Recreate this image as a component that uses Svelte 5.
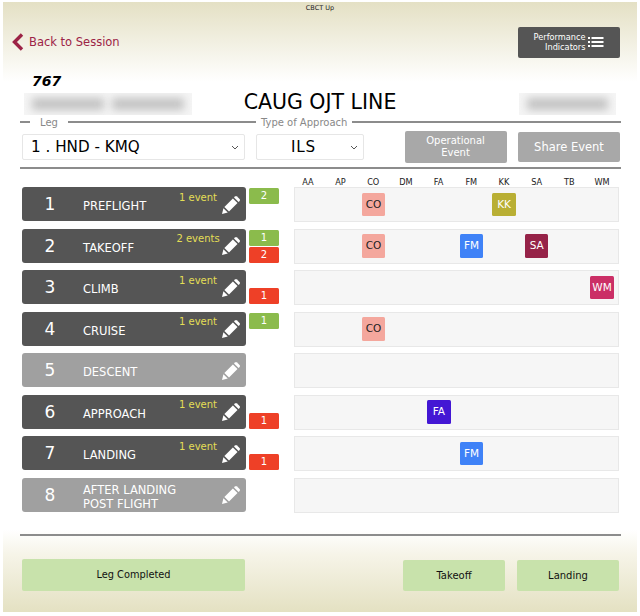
<script>
  const crew = ["AA", "AP", "CO", "DM", "FA", "FM", "KK", "SA", "TB", "WM"];
  const colors = {
    CO: "#f4a79d",
    KK: "#b9af34",
    FM: "#3f82f7",
    SA: "#962348",
    WM: "#cb2f66",
    FA: "#4317d4",
  };
  const phases = [
    { n: 1, name: "PREFLIGHT", events: "1 event", good: 2, chips: ["CO", "KK"] },
    { n: 2, name: "TAKEOFF", events: "2 events", good: 1, bad: 2, chips: ["CO", "FM", "SA"] },
    { n: 3, name: "CLIMB", events: "1 event", bad: 1, chips: ["WM"] },
    { n: 4, name: "CRUISE", events: "1 event", good: 1, chips: ["CO"] },
    { n: 5, name: "DESCENT", chips: [] },
    { n: 6, name: "APPROACH", events: "1 event", bad: 1, chips: ["FA"] },
    { n: 7, name: "LANDING", events: "1 event", bad: 1, chips: ["FM"] },
    { n: 8, name: "AFTER LANDING\nPOST FLIGHT", chips: [] },
  ];
</script>

<div class="screen">
  <header class="top">
    <div class="app-title">CBCT Up</div>
    <div class="top-bar">
      <div class="back">
        <svg width="12" height="18" viewBox="0 0 12 18">
          <path d="M10 1.5 L2.5 9 L10 16.5" fill="none" stroke="#9c2346" stroke-width="3.4" />
        </svg>
        <span>Back to Session</span>
      </div>
      <div class="perf">
        <span>Performance<br />Indicators</span>
        <svg width="16" height="14" viewBox="0 0 16 14">
          <g fill="#fff">
            <rect x="0" y="2" width="2" height="2" />
            <rect x="3.5" y="2" width="12" height="2" />
            <rect x="0" y="6" width="2" height="2" />
            <rect x="3.5" y="6" width="12" height="2" />
            <rect x="0" y="10" width="2" height="2" />
            <rect x="3.5" y="10" width="12" height="2" />
          </g>
        </svg>
      </div>
    </div>
  </header>

  <div class="aircraft">767</div>
  <div class="title-row">
    <div class="blur left"><i></i><i></i></div>
    <h1>CAUG OJT LINE</h1>
    <div class="blur right"><i></i></div>
  </div>

  <div class="legend">
    <span class="line a"></span>
    <span class="cap leg">Leg</span>
    <span class="line b"></span>
    <span class="cap">Type of Approach</span>
    <span class="line c"></span>
  </div>

  <div class="controls">
    <div class="select leg-select">
      <span>1 . HND - KMQ</span>
      <svg width="8" height="5" viewBox="0 0 8 5"><path d="M1 1 L4 4 L7 1" fill="none" stroke="#555" stroke-width="1" /></svg>
    </div>
    <div class="select type-select">
      <span>ILS</span>
      <svg width="8" height="5" viewBox="0 0 8 5"><path d="M1 1 L4 4 L7 1" fill="none" stroke="#555" stroke-width="1" /></svg>
    </div>
    <div class="gray-btn op">Operational<br />Event</div>
    <div class="gray-btn share">Share Event</div>
  </div>

  <hr class="rule" />

  <div class="crew-head">
    {#each crew as c}
      <span>{c}</span>
    {/each}
  </div>

  <div class="rows">
    {#each phases as p}
      <div class="row">
        <div class="phase" class:off={!p.events}>
          <span class="num">{p.n}</span>
          <span class="name">{p.name}</span>
          {#if p.events}
            <span class="events">{p.events}</span>
          {/if}
          <svg class="pencil" width="18" height="18" viewBox="0 0 18 18">
            <g fill="#fff">
              <path d="M0 18 L1.4 12.2 L5.8 16.6 Z" />
              <path d="M2.4 11 L10.9 2.5 L15.5 7.1 L7 15.6 Z" />
              <path d="M12 1.4 L13 .4 Q14 -.3 15 .4 L17.6 3 Q18.3 4 17.6 5 L16.6 6 Z" />
            </g>
          </svg>
        </div>
        <div class="badges">
          {#if p.good}
            <span class="badge good">{p.good}</span>
          {/if}
          {#if p.bad}
            <span class="badge bad">{p.bad}</span>
          {/if}
        </div>
        <div class="track">
          {#each crew as c}
            <div class="cell">
              {#if p.chips.includes(c)}
                <span class="chip" class:dark-text={c === "CO"} style="background: {colors[c]}">{c}</span>
              {/if}
            </div>
          {/each}
        </div>
      </div>
    {/each}
  </div>

  <hr class="rule end" />

  <footer class="bottom">
    <div class="green wide">Leg Completed</div>
    <div class="green narrow first">Takeoff</div>
    <div class="green narrow">Landing</div>
  </footer>
</div>

<style>
  :global(body) {
    margin: 0;
    background: #fff;
  }
  .screen {
    width: 634px;
    height: 611px;
    margin: 2px 3px 3px;
    position: relative;
    font-family: "DejaVu Sans", Verdana, sans-serif;
    overflow: hidden;
    color: #111;
  }
  .top {
    height: 80px;
    background: linear-gradient(#e4e0c4, #fff);
  }
  .app-title {
    text-align: center;
    font-size: 6.5px;
    line-height: 13px;
    color: #222;
  }
  .top-bar {
    display: flex;
    justify-content: space-between;
    padding: 11px 17.5px 0 9px;
  }
  .back {
    display: flex;
    align-items: center;
    gap: 5px;
    color: #9c2346;
    font-size: 11.5px;
    height: 32px;
  }
  .perf {
    width: 102px;
    height: 31px;
    margin-top: 0.5px;
    border-radius: 2px;
    background: #555;
    color: #fff;
    font-size: 8.2px;
    line-height: 10px;
    display: flex;
    align-items: center;
    justify-content: flex-end;
    gap: 2.5px;
    padding-right: 15.5px;
    box-sizing: border-box;
    text-align: right;
  }
  .aircraft {
    font-weight: bold;
    font-style: italic;
    font-size: 14px;
    line-height: 16px;
    margin: -9px 0 0 29px;
    color: #000;
    position: relative;
  }
  .title-row {
    display: flex;
    align-items: center;
    height: 24px;
    margin-top: 1px;
    position: relative;
  }
  h1 {
    margin: 0;
    font-weight: normal;
    font-size: 20.5px;
    color: #000;
    width: 100%;
    text-align: center;
  }
  .blur {
    position: absolute;
    top: 3px;
    height: 22px;
    background: #f5f5f5;
    overflow: hidden;
    display: flex;
    gap: 8px;
    padding: 5px 8px;
    box-sizing: border-box;
  }
  .blur i {
    display: block;
    flex: 1;
    height: 12px;
    background: #c2c2c2;
    filter: blur(4px);
  }
  .blur.left {
    left: 21px;
    width: 168px;
  }
  .blur.right {
    left: 516px;
    width: 97px;
  }
  .legend {
    display: flex;
    align-items: center;
    height: 14px;
    margin-top: 1px;
    padding-left: 17px;
    width: 601px;
    font-size: 10px;
    color: #888;
    gap: 5px;
  }
  .line {
    height: 1.5px;
    background: #8c8c8c;
  }
  .line.a {
    width: 10px;
  }
  .line.b {
    width: 188px;
  }
  .line.c {
    flex: 1;
  }
  .cap.leg {
    margin: 0 5px 0 5px;
  }
  .controls {
    display: flex;
    align-items: center;
    height: 32px;
    padding-left: 19px;
    margin-top: 2px;
  }
  .select {
    height: 26px;
    box-sizing: border-box;
    background: #fff;
    border: 1px solid #e6e6e6;
    border-radius: 2px;
    display: flex;
    align-items: center;
    justify-content: space-between;
    color: #000;
  }
  .leg-select {
    width: 223px;
    padding: 0 5px 0 8px;
    font-size: 15.2px;
  }
  .type-select {
    width: 108px;
    margin-left: 11px;
    padding: 0 5px 0 34px;
    font-size: 15.2px;
    letter-spacing: 0.8px;
  }
  .gray-btn {
    background: #a8a8a8;
    color: #fff;
    border-radius: 2px;
    width: 102px;
    text-align: center;
    box-sizing: border-box;
  }
  .op {
    margin-left: 40.5px;
    font-size: 10px;
    line-height: 12px;
    padding: 4px 0;
    height: 32px;
  }
  .share {
    margin-left: 11.5px;
    font-size: 11.5px;
    line-height: 30px;
    height: 30px;
  }
  .rule {
    margin: 4px 0 0 17px;
    width: 601px;
    height: 1.5px;
    border: 0;
    background: #8c8c8c;
  }
  .crew-head {
    display: grid;
    grid-template-columns: repeat(10, 32.7px);
    margin: 8px 0 0.5px 288.5px;
    font-size: 8.2px;
    line-height: 10px;
    text-align: center;
    color: #222;
  }
  .rows {
    display: flex;
    flex-direction: column;
    gap: 7.57px;
  }
  .row {
    display: flex;
    height: 34px;
    padding-left: 19px;
  }
  .phase {
    width: 223.5px;
    flex: none;
    border-radius: 3px;
    background: #555;
    color: #fff;
    display: grid;
    grid-template-columns: 61px 93px 44px 20px;
    align-items: center;
    position: relative;
  }
  .phase.off {
    background: #a0a0a0;
  }
  .num {
    text-align: center;
    font-size: 17px;
    padding-right: 5px;
  }
  .name {
    font-size: 11.5px;
    line-height: 14px;
    white-space: pre;
    grid-column: 2;
    padding-top: 4px;
  }
  .events {
    grid-column: 3;
    grid-row: 1;
    color: #e4df55;
    font-size: 10px;
    white-space: nowrap;
    justify-self: center;
    align-self: start;
    margin-top: 4.5px;
  }
  .pencil {
    grid-column: 4;
    grid-row: 1;
    justify-self: end;
    margin-top: 1px;
  }
  .badges {
    width: 30px;
    margin-left: 3.5px;
    flex: none;
    display: flex;
    flex-direction: column;
    gap: 1.5px;
    padding-top: 1px;
    box-sizing: border-box;
    height: 100%;
  }
  .badge {
    height: 16px;
    border-radius: 1.5px;
    color: #fff;
    font-size: 10px;
    line-height: 16px;
    text-align: center;
  }
  .badge.good {
    background: #8bbb4c;
  }
  .badge.bad {
    background: #ee4027;
    margin-top: auto;
  }
  .track {
    width: 325px;
    height: 35px;
    box-sizing: border-box;
    margin-left: 15px;
    flex: none;
    background: #f6f6f6;
    border: 1px solid #e8e8e8;
    display: grid;
    grid-template-columns: repeat(10, 32.65px);
    padding: 4.5px 0 0 1.5px;
  }
  .chip {
    display: block;
    width: 23.5px;
    height: 23.5px;
    border-radius: 1.5px;
    color: #fff;
    font-size: 10.5px;
    line-height: 23.5px;
    text-align: center;
  }
  .chip.dark-text {
    color: #222;
  }
  .rule.end {
    margin-top: 22.5px;
    position: relative;
  }
  .bottom {
    margin-top: -6px;
    height: 82.5px;
    background: linear-gradient(#fff, #f6f4e8 30%, #e4e1c2);
    display: flex;
    align-items: flex-end;
    padding: 0 0 21.5px 19px;
    box-sizing: border-box;
  }
  .green {
    background: #c8e2ab;
    color: #111;
    font-size: 10px;
    text-align: center;
    border-radius: 2px;
  }
  .wide {
    width: 223px;
    height: 32px;
    line-height: 32px;
    font-size: 9.8px;
  }
  .narrow {
    width: 102px;
    height: 31px;
    line-height: 32px;
    margin-left: 12px;
  }
  .narrow.first {
    margin-left: 158px;
  }
</style>
